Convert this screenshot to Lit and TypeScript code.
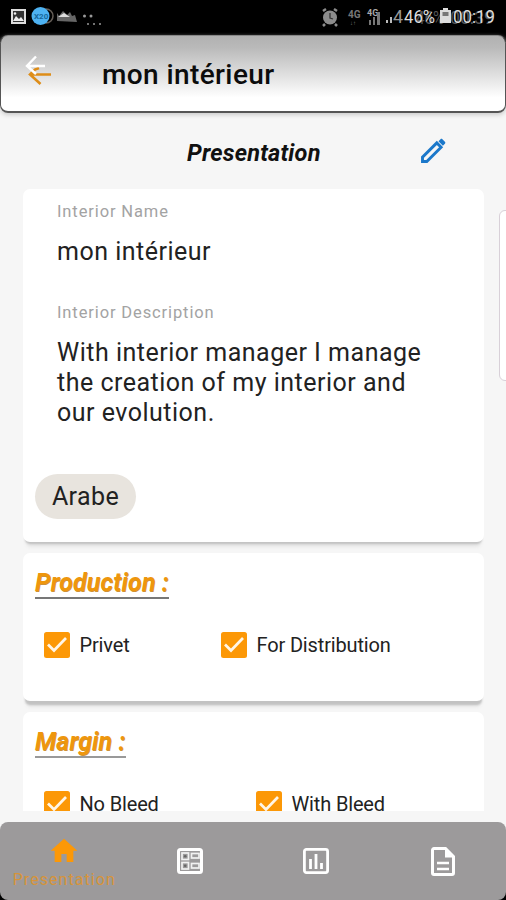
import { LitElement, html, css } from "lit";
import { customElement, property } from "lit/decorators.js";

@customElement("check-item")
class CheckItem extends LitElement {
  @property() label = "";
  static styles = css`
    :host { display: flex; align-items: center; height: 26px; }
    svg { width: 26px; height: 26px; flex: none; }
    .label { margin-left: 9.5px; font: 400 20px/26px Roboto, sans-serif; letter-spacing: -0.15px; color: #222; white-space: nowrap; }
  `;
  render() {
    return html`<svg viewBox="0 0 26 26"><rect width="26" height="26" rx="2.5" fill="#fc9807"/><path d="M4 12.500l6 6L22 6" fill="none" stroke="#fff6e8" stroke-width="2.700"/></svg><span class="label">${this.label}</span>`;
  }
}

@customElement("app-root")
class AppRoot extends LitElement {
  static styles = css`
    :host { display: flex; flex-direction: column; position: relative; width: 506px; height: 900px; overflow: hidden; background: #f6f6f6; font-family: Roboto, sans-serif; color: #222; }
    * { box-sizing: border-box; }
    svg { display: block; flex: none; }
    .status { height: 42px; margin-bottom: -7px; background: #000; flex: none; }
    .header { height: 78px; flex: none; border: 1px solid #555; border-top-color: #888; border-bottom: 2px solid #555; border-radius: 8px; background: linear-gradient(#b1b1b1, #b9b9b9 15%, #fff 82%); display: flex; align-items: center; padding-left: 23px; box-shadow: 0 2px 4px #ccc; z-index: 1; }
    .header svg { margin-top: -6px; }
    .header h1 { margin: 3px 0 0 47px; font: 500 28px/36px Roboto, sans-serif; letter-spacing: 0.4px; color: #0c0c0c; white-space: nowrap; }
    .titlebar { height: 76px; flex: none; display: flex; align-items: center; padding: 3px 59px 0 187px; justify-content: space-between; }
    .titlebar h2 { margin: 0; font: italic 700 23.5px/30px Roboto, sans-serif; letter-spacing: 0.2px; color: #111; }
    .titlebar svg { margin-top: -3px; }
    .scroll { height: 622px; flex: none; overflow: hidden; padding: 0 22px 0 23px; display: flex; flex-direction: column; gap: 11px; }
    .card { flex: none; background: #fff; border-radius: 7px; box-shadow: 0 4px 2px -2px #c2c2c2, 0 8px 4px -4px #dedede; }
    .production { box-shadow: 0 6px 2px -2px #c2c2c2, 0 9px 4px -4px #dedede; }
    .about { height: 353px; padding: 13px 12px 0; display: flex; flex-direction: column; align-items: flex-start; }
    .caption { margin-left: 22px; font-size: 16.5px; line-height: 20px; letter-spacing: 0.88px; color: #a3a3a3; }
    .value { margin: 15px 0 0 22px; font-size: 25px; line-height: 30px; letter-spacing: 0.5px; white-space: nowrap; }
    .gap { margin-top: 36px; }
    .chip { margin-top: 46px; width: 101px; height: 45px; border-radius: 23px; background: #e8e4de; display: flex; align-items: center; justify-content: center; font-size: 25px; letter-spacing: 0.4px; }
    .group { height: 148px; padding: 14px 12px 0; }
    .group h3 { margin: 0; display: inline-block; height: 32px; border-bottom: 2px solid #777; font: italic 700 25px/31px Roboto, sans-serif; letter-spacing: 0.1px; color: #ee960d; text-shadow: 0.5px 0.5px 0 #d09236; white-space: nowrap; }
    .margin h3 { border-bottom-color: #999; }
    .checks { display: flex; margin: 33px 0 0 9px; }
    .production .checks check-item:first-child { width: 177px; }
    .margin .checks check-item:first-child { width: 212px; }
    .nav { height: 78px; margin-top: 11px; flex: none; background: linear-gradient(#f6f6f6 50%, #000 50%); }
    .tabs { height: 78px; border-radius: 8px; background: #9c9a9b; display: grid; grid-template-columns: repeat(4, 1fr); }
    .tab { display: flex; flex-direction: column; align-items: center; justify-content: center; }
    .active { padding: 5px 0 0 2px; }
    .tab span { margin-top: 2px; font-size: 16px; line-height: 24px; letter-spacing: 1.05px; color: #d6943a; white-space: nowrap; }
    .edge { position: absolute; right: -8px; top: 210px; width: 15px; height: 171px; background: #fff; border: 1px solid #d8d0d8; border-radius: 6px; }
  `;

  statusBar() {
    const t = "Roboto, sans-serif";
    return html`<svg class="status" width="506" height="42" viewBox="0 0 506 42">
      <rect x="12" y="10" width="13" height="13" fill="#333" stroke="#ddd" stroke-width="2"/>
      <path d="M13 21l3-5 3 3 2-2 3 4z" fill="#eee"/><circle cx="15" cy="13.500" r="1.300" fill="#eee"/>
      <circle cx="46" cy="16" r="7" fill="none" stroke="#665f58" stroke-width="1.500"/>
      <circle cx="40.500" cy="16" r="9" fill="#4db2f2"/>
      <text x="34" y="19" font-family=${t} font-size="8" font-weight="700" fill="#17679c">X20</text>
      <path d="M57 21v-8l2 3 4-5 4 4 3-3 2 4 3-1 2 7z" fill="#666"/><path d="M58 17l6-4 6 4z" fill="#ddd"/>
      <g fill="#999"><circle cx="84.500" cy="16" r="1.500"/><circle cx="91" cy="16" r="1.500"/><circle cx="88" cy="24" r="1"/><circle cx="94" cy="24" r="1"/><circle cx="100" cy="24" r="1"/></g>
      <circle cx="330" cy="17.500" r="7" fill="#8c8c8c"/><path d="M323 11l3-2M337 11l-3-2M325 24l-2 2M335 24l2 2" stroke="#8c8c8c" stroke-width="2.500"/><path d="M330 13v5l3 1" fill="none" stroke="#333" stroke-width="1.300"/>
      <g font-family=${t} fill="#777"><text x="348" y="18" font-size="10" font-weight="700">4G</text><text x="350" y="25" font-size="6">↓↑</text><text x="367" y="16" font-size="9" font-weight="700" fill="#aaa">4G</text></g>
      <path d="M369 25v-5h2v5zM373 25v-8h2v8zM377 25V12h3v13z" fill="#777"/><g fill="#bbb"><rect x="386" y="20" width="2" height="3"/><rect x="390" y="17" width="2" height="6"/></g>
      <g font-family=${t} font-size="18"><g fill="#555"><text x="416" y="24" textLength="28" lengthAdjust="spacingAndGlyphs">46%</text><text x="450" y="24" textLength="44" lengthAdjust="spacingAndGlyphs">00:39</text></g>
      <g fill="#ddd"><text x="393" y="23" fill="#999">4</text><text x="404" y="23" textLength="31" lengthAdjust="spacingAndGlyphs">46%</text><text x="453" y="23" textLength="42" lengthAdjust="spacingAndGlyphs">00:19</text></g></g>
      <path d="M440 10h3V8h5v2h3v13h-11z" fill="#ddd"/><path d="M442.500 12h6v4h-6z" fill="#777"/>
    </svg>`;
  }

  render() {
    return html`
      ${this.statusBar()}
      <header class="header">
        <svg width="31" height="38" viewBox="0 0 31 38"><path d="M27 22.500H6M15 16l-4 1.500-5 5 10.500 9.500" fill="none" stroke="#de8d18" stroke-width="2.600"/><path d="M21 14H3M12 4.500L3 14l9 8" fill="none" stroke="#fff" stroke-width="2.400"/></svg>
        <h1>mon intérieur</h1>
      </header>
      <section class="titlebar"><h2>Presentation</h2>
        <svg width="28" height="28" viewBox="0 0 28 28"><path d="M3.500 24.500v-4.300L17.800 5.900l4.300 4.300L7.800 24.500z" fill="none" stroke="#1b78ca" stroke-width="2.900"/><path d="M19.500 4.200l2-1.900c.6-.6 1.300-.6 1.900 0l2.500 2.500c.6.6.6 1.300 0 1.900l-2 2z" fill="#1b78ca"/></svg>
      </section>
      <main class="scroll">
        <section class="card about">
          <div class="caption">Interior Name</div><div class="value">mon intérieur</div>
          <div class="caption gap">Interior Description</div>
          <div class="value">With interior manager I manage<br>the creation of my interior and<br>our evolution.</div>
          <div class="chip">Arabe</div>
        </section>
        <section class="card group production"><h3>Production :</h3><div class="checks"><check-item label="Privet"></check-item><check-item label="For Distribution"></check-item></div></section>
        <section class="card group margin"><h3>Margin :</h3><div class="checks"><check-item label="No Bleed"></check-item><check-item label="With Bleed"></check-item></div></section>
      </main>
      <div class="edge"></div>
      <nav class="nav"><div class="tabs">
        <div class="tab active"><svg width="32" height="30" viewBox="0 0 24 22.500"><path d="M10 19.500v-6h4v6h5V11h3L12 2 2 11h3v8.500z" fill="#fc9807"/></svg><span>Presentation</span></div>
        <div class="tab"><svg width="26" height="26" viewBox="0 0 26 26"><rect x="1.500" y="1.500" width="23" height="23" rx="2" fill="none" stroke="#fff" stroke-width="3"/><g fill="none" stroke="#f1f1f1" stroke-width="1.700"><rect x="5" y="5" width="6.500" height="6.500"/><rect x="5" y="14.500" width="6.500" height="6.500"/><rect x="14.500" y="5.500" width="7.500" height="4.500"/><rect x="14.500" y="15.500" width="7.500" height="4.500"/></g><circle cx="8.200" cy="8.200" r="1.300" fill="#666"/><circle cx="8.200" cy="17.700" r="1.300" fill="#666"/></svg></div>
        <div class="tab"><svg width="26" height="26" viewBox="0 0 26 26"><rect x="1.400" y="1.400" width="23.200" height="23.200" rx="2" fill="none" stroke="#fff" stroke-width="2.800"/><path d="M7.500 11v10M13 6v15M18.500 15v6" stroke="#fff" stroke-width="2.800"/></svg></div>
        <div class="tab"><svg width="24" height="29" viewBox="0 0 24 29"><path d="M3 1.500h11.500l8 8V26a1.500 1.500 0 0 1-1.500 1.500H3A1.500 1.500 0 0 1 1.500 26V3A1.500 1.500 0 0 1 3 1.500z" fill="none" stroke="#fff" stroke-width="3"/><path d="M14 1v9.500h9z" fill="#fff"/><path d="M6 16h12M6 22h12" stroke="#fff" stroke-width="2.500"/></svg></div>
      </div></nav>`;
  }
}
